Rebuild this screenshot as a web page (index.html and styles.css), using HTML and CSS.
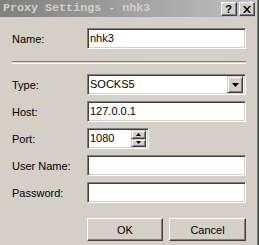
FILE: index.html
```html
<!DOCTYPE html>
<html lang="en">
<head>
    <meta charset="UTF-8">
    <title>Proxy Settings - nhk3</title>
    <link rel="stylesheet" href="styles.css">
</head>
<body>
<div class="window">
    <div class="titlebar">
        <span class="title">Proxy Settings - nhk3</span>
        <div class="caption">
            <span class="cbtn help">?</span>
            <span class="cbtn">
                <svg width="8" height="7" viewBox="0 0 8 7"><path d="M0 0h2l2 2.5 2-2.5h2l-3 3.5 3 3.5h-2l-2-2.5-2 2.5h-2l3-3.5z" fill="#000"/></svg>
            </span>
        </div>
    </div>
    <div class="content">
        <div class="form">
            <span class="label">Name:</span>
            <div class="field">nhk3</div>
        </div>
        <div class="sep"></div>
        <div class="form">
            <span class="label">Type:</span>
            <div class="field combo">
                <span class="value">SOCKS5</span>
                <span class="drop">
                    <svg width="7" height="4" viewBox="0 0 7 4"><path d="M0 0h7l-3.5 4z" fill="#000"/></svg>
                </span>
            </div>
            <span class="label">Host:</span>
            <div class="field">127.0.0.1</div>
            <span class="label">Port:</span>
            <div class="field spin">
                <span class="value">1080</span>
                <span class="arrows">
                    <span class="arrow"><svg width="5" height="3" viewBox="0 0 5 3"><path d="M2.5 0l2.5 3h-5z" fill="#000"/></svg></span>
                    <span class="arrow"><svg width="5" height="3" viewBox="0 0 5 3"><path d="M0 0h5l-2.5 3z" fill="#000"/></svg></span>
                </span>
            </div>
            <span class="label">User Name:</span>
            <div class="field"></div>
            <span class="label">Password:</span>
            <div class="field"></div>
        </div>
        <div class="buttons">
            <button class="btn ok">OK</button>
            <button class="btn cancel">Cancel</button>
        </div>
    </div>
</div>
</body>
</html>
```

FILE: styles.css
```css
body {
    margin: 0;
    background-color: #d4d0c8;
    font-family: "Liberation Sans", Arial, sans-serif;
    font-size: 11px;
    color: #000000;
}

.window {
    width: 259px;
    height: 245px;
    box-sizing: border-box;
    padding-right: 3px;
    border-right: 1px solid #404040;
    box-shadow: inset -1px 0 0 #808080;
    overflow: hidden;
}

/* caption bar of an inactive window */
.titlebar {
    height: 17px;
    display: flex;
    align-items: flex-start;
    background: linear-gradient(to right, #808080, #c0c0c0);
}
.title {
    font-family: "Liberation Mono", monospace;
    font-weight: bold;
    font-size: 11.7px;
    line-height: 17px;
    color: #d4d0c8;
    padding-left: 3px;
    white-space: pre;
}
.caption {
    margin-left: auto;
    margin-right: 0;
    margin-top: 2px;
    display: flex;
    gap: 2px;
}
.cbtn {
    width: 16px;
    height: 14px;
    box-sizing: border-box;
    background-color: #d4d0c8;
    border: 1px solid;
    border-color: #ffffff #404040 #404040 #ffffff;
    box-shadow: inset -1px -1px 0 #808080;
    display: flex;
    align-items: center;
    justify-content: center;
}
.help {
    font-weight: bold;
    font-size: 11px;
    line-height: 11px;
    padding-right: 1px;
}

.content {
    padding-left: 12px;
}

.form {
    display: grid;
    grid-template-columns: 75px 159px;
    row-gap: 6px;
    align-items: center;
}
.content > .form:first-child {
    margin-top: 11px;
}

.field {
    height: 21px;
    box-sizing: border-box;
    background-color: #ffffff;
    border: 1px solid;
    border-color: #808080 #ffffff #ffffff #808080;
    box-shadow: inset 1px 1px 0 #404040, inset -1px -1px 0 #d4d0c8;
    padding: 0 2px;
    line-height: 19px;
    display: flex;
    align-items: center;
}

.combo, .spin {
    padding: 2px 2px 2px 2px;
}
.value {
    flex: 1;
    line-height: 17px;
}
.drop {
    width: 16px;
    height: 17px;
    box-sizing: border-box;
    background-color: #d4d0c8;
    border: 1px solid;
    border-color: #d4d0c8 #404040 #404040 #d4d0c8;
    box-shadow: inset 1px 1px 0 #ffffff, inset -1px -1px 0 #808080;
    display: flex;
    align-items: center;
    justify-content: center;
}

.spin {
    width: 62px;
}
.arrows {
    width: 15px;
    height: 17px;
    display: flex;
    flex-direction: column;
}
.arrow {
    flex: 1;
    box-sizing: border-box;
    background-color: #d4d0c8;
    border: 1px solid;
    border-color: #d4d0c8 #404040 #404040 #d4d0c8;
    box-shadow: inset 1px 1px 0 #ffffff, inset -1px -1px 0 #808080;
    display: flex;
    align-items: center;
    justify-content: center;
}

.sep {
    width: 234px;
    height: 1px;
    margin: 12px 0 10px 0;
    border-top: 1px solid #808080;
    border-bottom: 1px solid #ffffff;
}

.buttons {
    margin-top: 15px;
    margin-left: 75px;
    display: flex;
    gap: 6px;
}
.btn {
    height: 23px;
    box-sizing: border-box;
    padding: 0;
    font-family: "Liberation Sans", Arial, sans-serif;
    font-size: 11px;
    color: #000000;
    background-color: #d4d0c8;
    border: 1px solid;
    border-color: #ffffff #404040 #404040 #ffffff;
    box-shadow: inset -1px -1px 0 #808080;
}
.ok {
    width: 76px;
}
.cancel {
    width: 77px;
}
```
